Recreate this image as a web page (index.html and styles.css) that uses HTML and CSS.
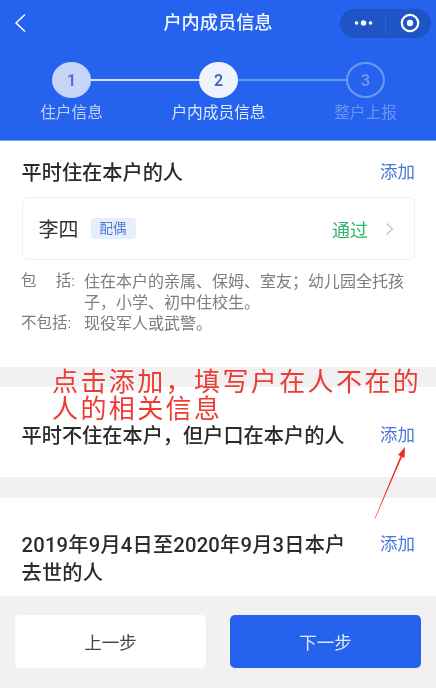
FILE: index.html
```html
<!DOCTYPE html>
<html lang="zh-CN">
<head>
<meta charset="utf-8">
<title>户内成员信息</title>
<link rel="stylesheet" href="styles.css">
</head>
<body>
<div class="app">
  <header class="top">
    <div class="nav">
      <svg class="back" width="12" height="20" viewBox="0 0 12 20"><path d="M10.5 2 L2 10 L10.5 18" fill="none" stroke="#fff" stroke-width="1.6" stroke-linecap="round" stroke-linejoin="round"/></svg>
      <div class="nav-title">户内成员信息</div>
      <div class="capsule">
        <svg class="cap-dots" width="20" height="6" viewBox="0 0 20 6"><circle cx="2.5" cy="3" r="1.8" fill="#fff"/><circle cx="9.5" cy="3" r="2.7" fill="#fff"/><circle cx="16.5" cy="3" r="1.8" fill="#fff"/></svg>
        <span class="cap-line"></span>
        <svg class="cap-target" width="20" height="20" viewBox="0 0 20 20"><circle cx="10" cy="10" r="8.2" fill="none" stroke="#fff" stroke-width="2.2"/><circle cx="10" cy="10" r="3.2" fill="#fff"/></svg>
      </div>
    </div>
    <div class="stepper">
      <div class="step step-done"><div class="dot">1</div><div class="step-label">住户信息</div></div>
      <div class="step step-active"><div class="dot">2</div><div class="step-label">户内成员信息</div></div>
      <div class="step step-todo"><div class="dot">3</div><div class="step-label">整户上报</div></div>
    </div>
  </header>

  <section class="sec sec-one">
    <div class="sec-head"><h2 class="sec-title">平时住在本户的人</h2><a class="add">添加</a></div>
    <div class="card">
      <span class="name">李四</span>
      <span class="tag">配偶</span>
      <span class="status">通过</span>
      <svg class="chev" width="9" height="14" viewBox="0 0 9 14"><path d="M1.5 1.5 L7.5 7 L1.5 12.5" fill="none" stroke="#c4c6ca" stroke-width="1.4"/></svg>
    </div>
    <dl class="notes">
      <dt class="spread"><span>包</span><span>括:</span></dt><dd>住在本户的亲属、保姆、室友；幼儿园全托孩子，小学、初中住校生。</dd>
      <dt>不包括:</dt><dd>现役军人或武警。</dd>
    </dl>
  </section>

  <section class="sec sec-two">
    <div class="sec-head"><h2 class="sec-title">平时不住在本户，但户口在本户的人</h2><a class="add">添加</a></div>
  </section>

  <section class="sec sec-three">
    <div class="sec-head"><h2 class="sec-title narrow">2019年9月4日至2020年9月3日本户去世的人</h2><a class="add">添加</a></div>
  </section>

  <footer class="foot">
    <button class="btn btn-prev">上一步</button>
    <button class="btn btn-next">下一步</button>
  </footer>

  <div class="note-red">点击添加，填写户在人不在的<br>人的相关信息</div>
  <svg class="arrow" width="40" height="80" viewBox="0 0 40 80"><path d="M3.5 74 L29.5 11 L27 10 L34 2 L33.5 13 L31 12 L4 74 Z" fill="#ee2a24"/></svg>
</div>
</body>
</html>
```
FILE: styles.css
```css
* { box-sizing: border-box; }
html, body { margin: 0; padding: 0; }
body {
  background: #f1f1f1;
  font-family: "Roboto", "Noto Sans CJK SC", sans-serif;
  color: #2a2a2a;
}
.app {
  position: relative;
  width: 436px;
  height: 688px;
  overflow: hidden;
  display: flex;
  flex-direction: column;
  background: #f1f1f1;
  filter: blur(0.35px);
}
.top {
  height: 141px;
  background: #2563ef;
  color: #fff;
  border-bottom: 1px solid #7fa3f5;
}
.nav {
  height: 46px;
  display: grid;
  grid-template-columns: 1fr auto 1fr;
  align-items: center;
  padding: 0 5px;
}
.back { justify-self: start; margin-left: 9px; }
.nav-title { font-size: 18.2px; font-weight: 500; line-height: 46px; color: #f4f7ff; }
.capsule {
  justify-self: end;
  width: 91px;
  height: 29px;
  border-radius: 15px;
  background: #1f54c6;
  display: flex;
  align-items: center;
  padding-left: 14px;
}
.cap-line { width: 1px; height: 20px; margin: 0 14px 0 11px; background: #2f62d2; }
.stepper {
  margin-top: 16px;
  padding-left: 1px;
  display: grid;
  grid-template-columns: repeat(3, 147px);
  justify-content: center;
}
.step { position: relative; display: flex; flex-direction: column; align-items: center; }
.dot {
  width: 39px;
  height: 36px;
  border-radius: 50%;
  display: flex;
  align-items: center;
  justify-content: center;
  font-size: 16px;
  font-weight: 600;
}
.step-label { margin-top: 4px; font-size: 15.7px; line-height: 22px; white-space: nowrap; }
.step-done .dot { background: #c6d5f8; color: #4a6fc9; }
.step-done .step-label { color: #bcd0fa; }
.step-active .dot { background: #eff3fd; color: #3e63c4; }
.step-active .step-label { color: #dfe8fc; }
.step-todo .dot { border: 2px solid #7098ef; color: #7098ef; }
.step-todo .step-label { color: #6b94ee; }
.step-done::after, .step-active::after {
  content: "";
  position: absolute;
  left: calc(50% + 19px);
  top: 17px;
  width: 109px;
  height: 2px;
}
.step-done::after { background: #d6e1fb; }
.step-active::after { background: #6c94ee; }

.sec { background: #fff; padding: 0 21px; }
.sec-one { height: 226px; padding-top: 18px; }
.sec-two { height: 90px; margin-top: 20px; padding-top: 35px; }
.sec-three { height: 98px; margin-top: 21px; padding-top: 33px; }
.sec-head { display: flex; justify-content: space-between; align-items: flex-start; }
.sec-title { margin: 0 0 0 0.5px; font-size: 20.2px; font-weight: 500; line-height: 28px; color: #2b2b2b; }
.narrow { width: 328px; letter-spacing: 0.22px; }
.add { font-size: 17.5px; line-height: 26px; color: #4a78d8; }
.card {
  margin-top: 10px;
  margin-left: 0.5px;
  height: 63px;
  border: 1px solid #eeeeee;
  border-radius: 6px;
  display: flex;
  align-items: center;
  padding: 0 20px 0 16px;
}
.name { font-size: 20px; color: #333; }
.tag {
  margin-left: 12px;
  width: 45px;
  height: 21px;
  border-radius: 4px;
  background: #e6edfb;
  color: #4f7bd8;
  font-size: 13.5px;
  line-height: 21px;
  text-align: center;
}
.status { margin-left: auto; font-size: 18px; color: #2fb566; }
.chev { margin-left: 17px; }
.notes {
  margin: 11px 0 0;
  display: grid;
  grid-template-columns: 56px 1fr;
  column-gap: 7px;
  font-size: 16px;
  line-height: 21px;
  color: #7d7d7d;
}
.notes dt { white-space: nowrap; font-size: 15.5px; }
.notes dd { margin: 0; }
.spread { display: flex; justify-content: space-between; width: 54px; }

.foot {
  flex: 1;
  display: flex;
  gap: 24px;
  padding: 19px 15px 20px;
}
.btn {
  flex: 1;
  border: 0;
  border-radius: 5px;
  font-family: inherit;
  font-size: 17.5px;
}
.btn-prev { background: #fff; color: #444; }
.btn-next { background: #2563ef; color: #dfe8fc; }

.note-red {
  position: absolute;
  left: 52px;
  top: 369px;
  font-size: 26px;
  line-height: 27px;
  letter-spacing: 2.4px;
  font-weight: 400;
  color: #ee3b34;
  white-space: nowrap;
}
.arrow { position: absolute; left: 371px; top: 445px; }
```
